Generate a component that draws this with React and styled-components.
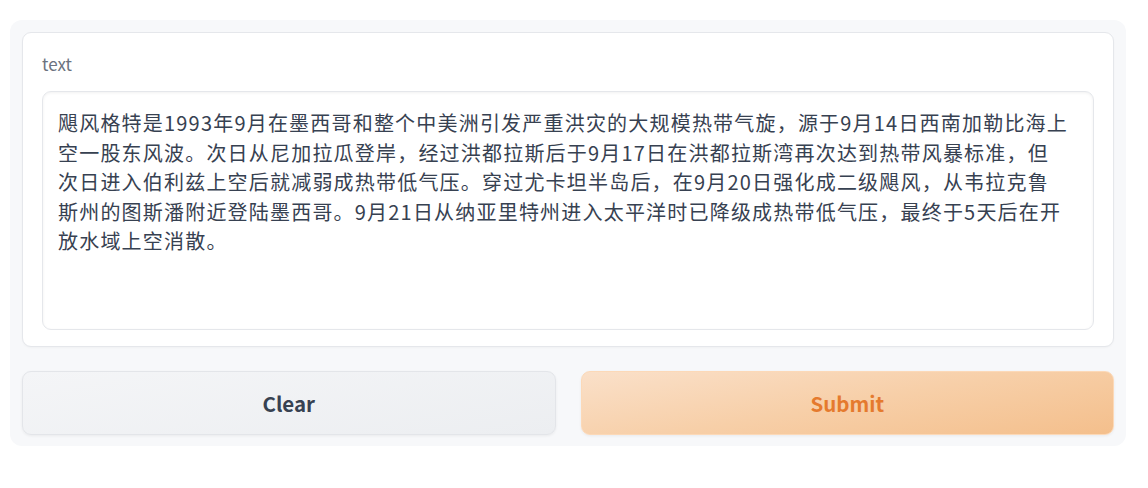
import React from 'react';
import styled, { createGlobalStyle } from 'styled-components';

const GlobalStyle = createGlobalStyle`
  html, body {
    margin: 0;
    padding: 0;
    background: #ffffff;
  }
  body {
    font-family: 'Noto Sans CJK SC', 'Noto Sans', sans-serif;
  }
`;

const Page = styled.div`
  padding: 20px 22px 0 10px;
`;

const Panel = styled.div`
  background: #f7f8fa;
  border-radius: 12px;
  padding: 12px 12px 11px 12px;
  display: flex;
  flex-direction: column;
  gap: 24px;
`;

const Card = styled.div`
  background: #ffffff;
  border: 1px solid #e5e7eb;
  border-radius: 9px;
  padding: 19px 19px 16px 19px;
  box-shadow: 0 1px 2px rgba(0, 0, 0, 0.03);
  display: flex;
  flex-direction: column;
  gap: 15px;
`;

const Label = styled.label`
  font-size: 17px;
  line-height: 24px;
  color: #6b7280;
`;

const TextArea = styled.textarea`
  display: block;
  box-sizing: border-box;
  width: 100%;
  height: 239px;
  resize: none;
  border: 1px solid #e5e7eb;
  border-radius: 9px;
  padding: 16px 15px;
  font-family: 'Noto Sans CJK SC', 'Noto Sans', sans-serif;
  font-size: 20px;
  letter-spacing: 1.2px;
  line-height: 29.5px;
  color: #374151;
  background: #ffffff;
  box-shadow: inset 0 1px 3px rgba(0, 0, 0, 0.06);
  outline: none;
  overflow: hidden;
  white-space: pre-wrap;
`;

const Actions = styled.div`
  display: grid;
  grid-template-columns: 1fr 1fr;
  gap: 25px;
`;

const Button = styled.button`
  height: 64px;
  border-radius: 9px;
  font-family: 'Noto Sans CJK SC', 'Noto Sans', sans-serif;
  font-size: 20.5px;
  font-weight: 700;
  cursor: pointer;
  box-shadow: 0 1px 3px rgba(0, 0, 0, 0.06);
  border: 1px solid ${props => (props.primary ? '#fcd9b8' : '#e3e5e9')};
  color: ${props => (props.primary ? '#e57a2e' : '#374151')};
  background: ${props =>
    props.primary
      ? 'linear-gradient(170deg, #fae0c9 0%, #f7cfa8 50%, #f4bf8c 100%)'
      : 'linear-gradient(170deg, #f4f5f7 0%, #eceef1 100%)'};
`;

const story = [
  '飓风格特是1993年9月在墨西哥和整个中美洲引发严重洪灾的大规模热带气旋，源于9月14日西南加勒比海上',
  '空一股东风波。次日从尼加拉瓜登岸，经过洪都拉斯后于9月17日在洪都拉斯湾再次达到热带风暴标准，但',
  '次日进入伯利兹上空后就减弱成热带低气压。穿过尤卡坦半岛后，在9月20日强化成二级飓风，从韦拉克鲁',
  '斯州的图斯潘附近登陆墨西哥。9月21日从纳亚里特州进入太平洋时已降级成热带低气压，最终于5天后在开',
  '放水域上空消散。',
].join('\n');

export default function App() {
  return (
    <>
      <GlobalStyle />
      <Page>
        <Panel>
          <Card>
            <Label htmlFor="text-input">text</Label>
            <TextArea id="text-input" readOnly value={story} />
          </Card>
          <Actions>
            <Button>Clear</Button>
            <Button primary>Submit</Button>
          </Actions>
        </Panel>
      </Page>
    </>
  );
}
